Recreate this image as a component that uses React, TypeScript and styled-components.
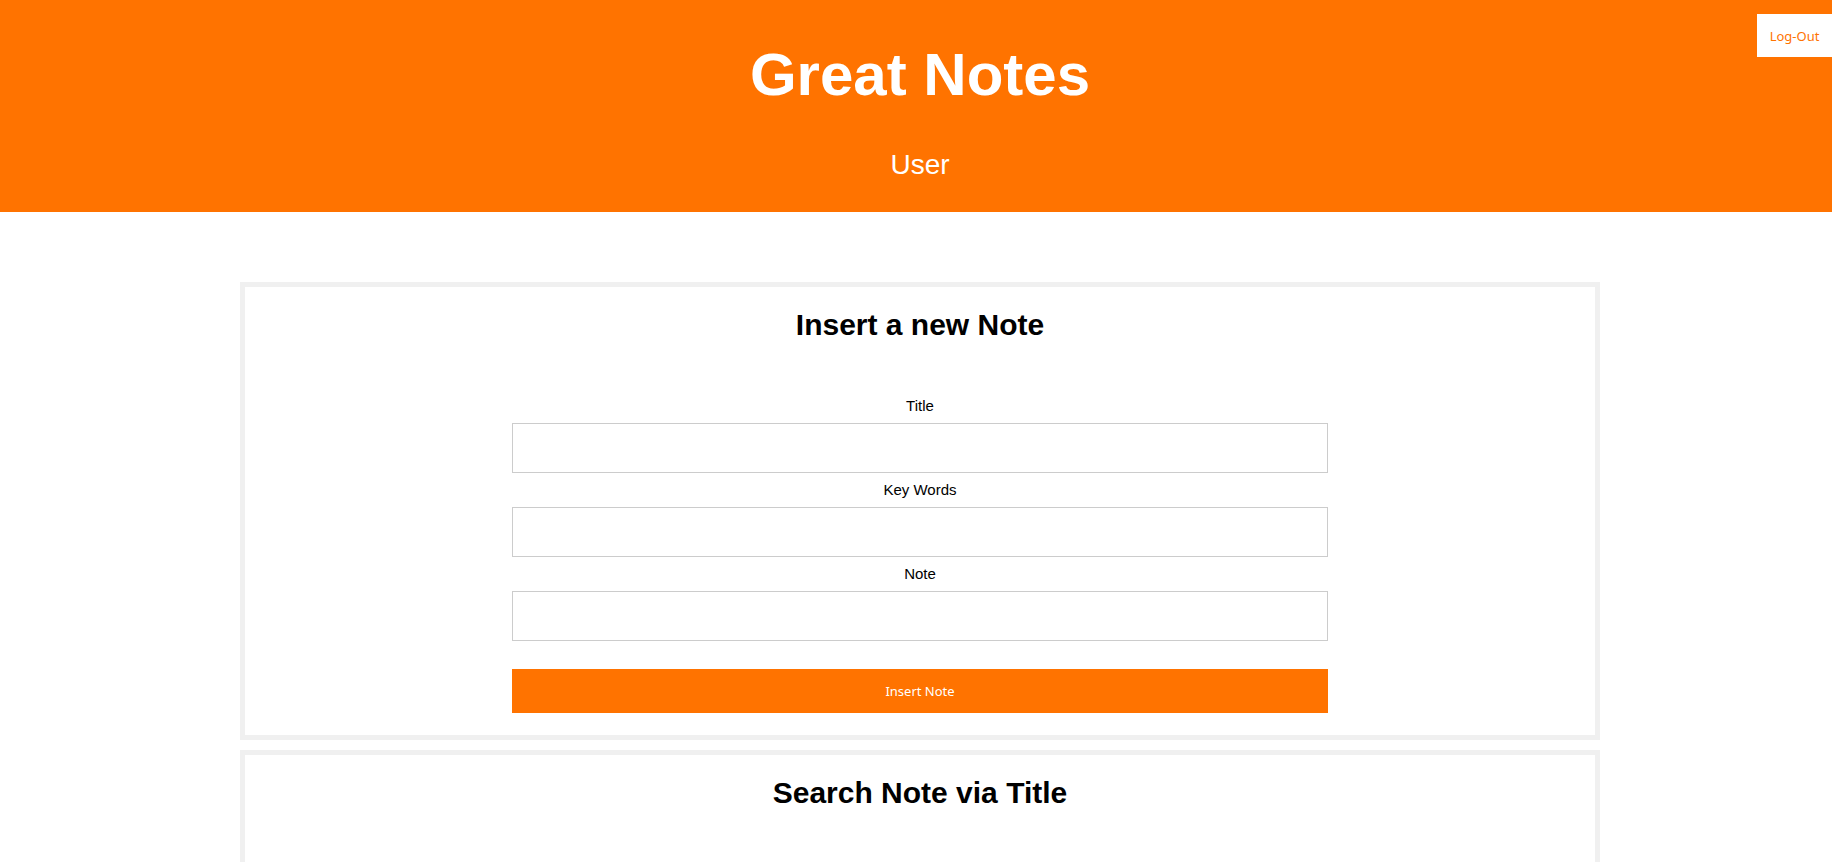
import React from "react";
import styled, { createGlobalStyle } from "styled-components";

const ORANGE = "#ff7300";

const Global = createGlobalStyle`
  html, body {
    margin: 0;
    padding: 0;
    overflow-x: hidden;
    background: #ffffff;
  }
  * { box-sizing: border-box; }
`;

const Page = styled.div`
  width: 1840px;
  font-family: "Liberation Sans", Arial, sans-serif;
  color: #000;
  position: relative;
`;

const Header = styled.header`
  background: ${ORANGE};
  display: flex;
  flex-direction: column;
  align-items: center;
  padding: 41px 0 31px;
  gap: 41px;
  color: #fff;
`;

const Title = styled.h1`
  margin: 0;
  font-size: 60px;
  line-height: 67px;
  font-weight: 700;
`;

const UserName = styled.div`
  font-size: 28px;
  line-height: 32px;
`;

const LogOut = styled.button`
  position: absolute;
  top: 14px;
  right: 8px;
  width: 75px;
  height: 43px;
  border: none;
  background: #fff;
  color: ${ORANGE};
  font-family: "Noto Sans", sans-serif;
  font-size: 13px;
  padding: 0;
  cursor: pointer;
`;

const Main = styled.main`
  display: flex;
  flex-direction: column;
  gap: 10px;
  padding: 70px 240px 40px;
`;

const Card = styled.section`
  border: 5px solid #f0f0f0;
  padding: 21px 0 22px;
  display: flex;
  flex-direction: column;
  align-items: center;
`;

const CardTitle = styled.h2`
  margin: 0;
  font-size: 30px;
  line-height: 34px;
  font-weight: 700;
`;

const Form = styled.form`
  width: 816px;
  margin-top: 55px;
  display: flex;
  flex-direction: column;
`;

const Label = styled.label`
  font-size: 15px;
  line-height: 17px;
  text-align: center;
  margin-bottom: 9px;
`;

const Input = styled.input`
  height: 50px;
  border: 1px solid #cccccc;
  background: #fff;
  margin: 0 0 8px;
  padding: 0 10px;
  font-family: "Liberation Sans", Arial, sans-serif;
  font-size: 15px;
  outline: none;
`;

const Submit = styled.button`
  margin-top: 20px;
  height: 44px;
  border: none;
  background: ${ORANGE};
  color: #fff;
  font-family: "Noto Sans", sans-serif;
  font-size: 13px;
  cursor: pointer;
`;

export default function App() {
  return (
    <Page>
      <Global />
      <Header>
        <Title>Great Notes</Title>
        <UserName>User</UserName>
      </Header>
      <LogOut>Log-Out</LogOut>
      <Main>
        <Card>
          <CardTitle>Insert a new Note</CardTitle>
          <Form onSubmit={(e) => e.preventDefault()}>
            <Label>Title</Label>
            <Input type="text" />
            <Label>Key Words</Label>
            <Input type="text" />
            <Label>Note</Label>
            <Input type="text" />
            <Submit type="submit">Insert Note</Submit>
          </Form>
        </Card>
        <Card>
          <CardTitle>Search Note via Title</CardTitle>
          <Form onSubmit={(e) => e.preventDefault()}>
            <Label>Title</Label>
            <Input type="text" />
            <Submit type="submit">Search Note</Submit>
          </Form>
        </Card>
      </Main>
    </Page>
  );
}
